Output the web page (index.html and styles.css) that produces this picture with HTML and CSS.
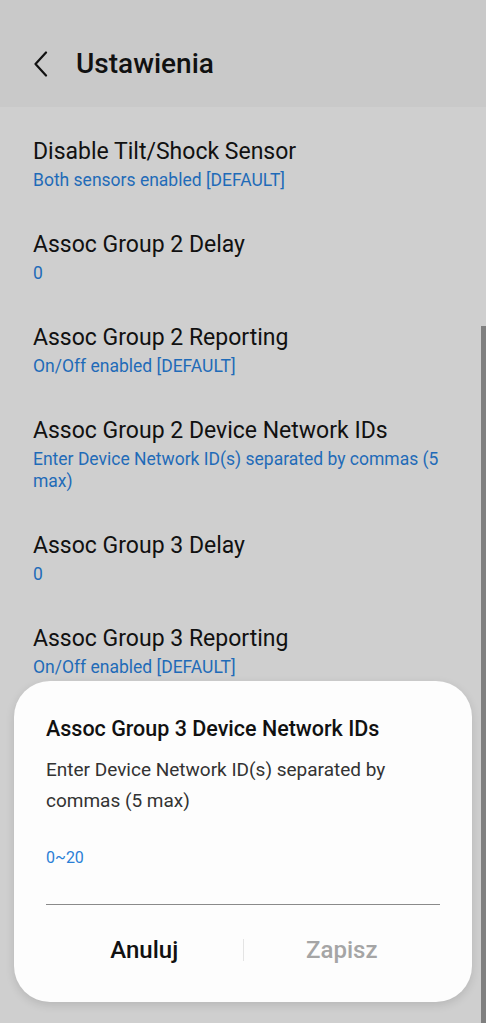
FILE: index.html
```html
<html>
  <head>
    <title>Ustawienia</title>
    <link rel="stylesheet" href="styles.css">
  </head>
  <body>
    <div class="screen">
      <div class="header">
        <div class="back">
          <svg width="16" height="26" viewBox="0 0 16 26"><path d="M13 1.5 L2.5 13 L13 24.5" fill="none" stroke="#111" stroke-width="2.2" stroke-linecap="round" stroke-linejoin="round"/></svg>
        </div>
        <div class="title">Ustawienia</div>
      </div>
      <div class="list">
        <div class="item">
          <div class="name">Disable Tilt/Shock Sensor</div>
          <div class="value">Both sensors enabled [DEFAULT]</div>
        </div>
        <div class="item">
          <div class="name">Assoc Group 2 Delay</div>
          <div class="value">0</div>
        </div>
        <div class="item">
          <div class="name">Assoc Group 2 Reporting</div>
          <div class="value">On/Off enabled [DEFAULT]</div>
        </div>
        <div class="item">
          <div class="name">Assoc Group 2 Device Network IDs</div>
          <div class="value">Enter Device Network ID(s) separated by commas (5 max)</div>
        </div>
        <div class="item">
          <div class="name">Assoc Group 3 Delay</div>
          <div class="value">0</div>
        </div>
        <div class="item">
          <div class="name">Assoc Group 3 Reporting</div>
          <div class="value">On/Off enabled [DEFAULT]</div>
        </div>
      </div>
      <div class="scrollbar"></div>
      <div class="dialog">
        <div class="dialog-title">Assoc Group 3 Device Network IDs</div>
        <div class="dialog-text">Enter Device Network ID(s) separated by commas (5 max)</div>
        <div class="hint">0~20</div>
        <div class="field"></div>
        <div class="buttons">
          <div class="button cancel">Anuluj</div>
          <div class="sep"></div>
          <div class="button save">Zapisz</div>
        </div>
      </div>
    </div>
  </body>
</html>
```

FILE: styles.css
```css
body {
  margin: 0;
  font-family: Roboto, "Noto Sans", sans-serif;
  background: #cfcfcf;
}
.screen {
  position: relative;
  width: 486px;
  height: 1023px;
  overflow: hidden;
  background: #cfcfcf;
}
.header {
  display: flex;
  align-items: center;
  height: 87px;
  padding-top: 20px;
  background: #c9c9c9;
}
.back {
  display: flex;
  margin-left: 33px;
  width: 43px;
}
.title {
  font-size: 28px;
  font-weight: 500;
  color: #111;
}
.list {
  padding-top: 10px;
}
.item {
  padding: 18px 38px 19px 33px;
}
.name {
  font-size: 23px;
  line-height: 34px;
  color: #111;
}
.value {
  font-size: 17.5px;
  line-height: 22px;
  color: #1f6bb8;
}
.scrollbar {
  position: absolute;
  right: 0;
  top: 326px;
  bottom: 0;
  width: 5px;
  background: #808080;
}
.dialog {
  position: absolute;
  left: 14px;
  top: 681px;
  width: 394px;
  height: 281px;
  padding: 33px 32px 7px;
  background: #fdfdfd;
  border-radius: 36px;
  box-shadow: 0 3px 10px rgba(0, 0, 0, 0.12);
}
.dialog-title {
  font-size: 21.5px;
  font-weight: 500;
  line-height: 30px;
  color: #111;
}
.dialog-text {
  margin-top: 10px;
  font-size: 19px;
  line-height: 31px;
  color: #333;
  padding-right: 30px;
}
.hint {
  margin-top: 32px;
  font-size: 16px;
  line-height: 20px;
  color: #2a7fd6;
}
.field {
  margin-top: 36px;
  border-bottom: 1px solid #8a8a8a;
}
.buttons {
  display: flex;
  align-items: center;
  height: 90px;
}
.button {
  flex: 1;
  text-align: center;
  font-size: 24px;
  font-weight: 500;
}
.cancel {
  color: #111;
}
.save {
  color: #a5a5a5;
}
.sep {
  width: 1px;
  height: 22px;
  background: #e4e4e4;
}
```
